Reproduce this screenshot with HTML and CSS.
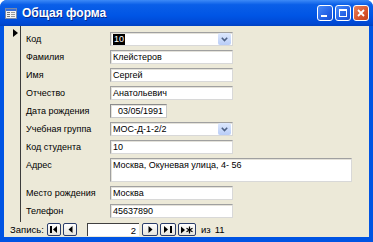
FILE: index.html
```html
<!DOCTYPE html>
<html lang="ru">
<head>
    <meta charset="UTF-8">
    <title>Общая форма</title>
    <link rel="stylesheet" href="styles.css">
</head>
<body>

    <div class="window">

        <!-- Title bar -->
        <div class="titlebar">
            <svg class="app-icon" width="12" height="11" viewBox="0 0 12 11">
                <rect x="0.5" y="0.5" width="11" height="10" fill="#f4f4f4" stroke="#7a8aa8"/>
                <rect x="1" y="1" width="10" height="2" fill="#3b6fd6"/>
                <rect x="2" y="4" width="3" height="1" fill="#777"/>
                <rect x="6" y="4" width="4" height="1" fill="#999"/>
                <rect x="2" y="6" width="3" height="1" fill="#777"/>
                <rect x="6" y="6" width="4" height="1" fill="#999"/>
                <rect x="2" y="8" width="3" height="1" fill="#777"/>
                <rect x="6" y="8" width="4" height="1" fill="#999"/>
            </svg>
            <span class="title">Общая форма</span>
            <div class="caption-buttons">
                <span class="cbtn">
                    <svg width="14" height="14" viewBox="0 0 14 14"><rect x="3" y="9" width="6" height="2" fill="#fff"/></svg>
                </span>
                <span class="cbtn">
                    <svg width="14" height="14" viewBox="0 0 14 14"><rect x="3.5" y="3.5" width="7" height="7" fill="none" stroke="#fff"/><rect x="3" y="3" width="8" height="2" fill="#fff"/></svg>
                </span>
                <span class="cbtn close">
                    <svg width="14" height="14" viewBox="0 0 14 14"><path d="M4 4 L10 10 M10 4 L4 10" stroke="#fff" stroke-width="1.8"/></svg>
                </span>
            </div>
        </div>

        <div class="frame">
            <div class="client">

                <!-- Record area -->
                <div class="detail">
                    <div class="selector">
                        <svg width="5" height="8" viewBox="0 0 5 8"><path d="M0 0 L5 4 L0 8 Z" fill="#000"/></svg>
                    </div>

                    <div class="fields">
                        <label>Код</label>
                        <div class="field combo w-std"><span class="sel">10</span><span class="drop"><svg width="7" height="5" viewBox="0 0 7 5"><path d="M0.8 0.8 L3.5 3.5 L6.2 0.8" fill="none" stroke="#4d6185" stroke-width="1.6"/></svg></span></div>

                        <label>Фамилия</label>
                        <div class="field w-std">Клейстеров</div>

                        <label>Имя</label>
                        <div class="field w-std">Сергей</div>

                        <label>Отчество</label>
                        <div class="field w-std">Анатольевич</div>

                        <label>Дата рождения</label>
                        <div class="field w-date date">03/05/1991</div>

                        <label>Учебная группа</label>
                        <div class="field combo w-std">МОС-Д-1-2/2<span class="drop"><svg width="7" height="5" viewBox="0 0 7 5"><path d="M0.8 0.8 L3.5 3.5 L6.2 0.8" fill="none" stroke="#4d6185" stroke-width="1.6"/></svg></span></div>

                        <label>Код студента</label>
                        <div class="field w-std">10</div>

                        <label class="top">Адрес</label>
                        <div class="field w-wide tall">Москва, Окуневая улица, 4- 56</div>

                        <label>Место рождения</label>
                        <div class="field w-std">Москва</div>

                        <label>Телефон</label>
                        <div class="field w-std">45637890</div>
                    </div>
                </div>

                <!-- Record navigation -->
                <div class="navbar">
                    <span class="nav-label">Запись:</span>
                    <span class="nbtn">
                        <svg width="8" height="7" viewBox="0 0 8 7"><rect x="0" y="0" width="2" height="7" fill="#000"/><path d="M7 0 L3 3.5 L7 7 Z" fill="#000"/></svg>
                    </span>
                    <span class="nbtn">
                        <svg width="5" height="7" viewBox="0 0 5 7"><path d="M4.5 0 L0.5 3.5 L4.5 7 Z" fill="#000"/></svg>
                    </span>
                    <span class="nav-field">2</span>
                    <span class="nbtn big">
                        <svg width="5" height="7" viewBox="0 0 5 7"><path d="M0.5 0 L4.5 3.5 L0.5 7 Z" fill="#000"/></svg>
                    </span>
                    <span class="nbtn big">
                        <svg width="8" height="7" viewBox="0 0 8 7"><path d="M0 0 L4 3.5 L0 7 Z" fill="#000"/><rect x="6" y="0" width="2" height="7" fill="#000"/></svg>
                    </span>
                    <span class="nbtn wide">
                        <svg width="12" height="8" viewBox="0 0 12 8"><path d="M0 0.5 L4 4 L0 7.5 Z" fill="#000"/><path d="M8.5 0.5 V7.5 M5.5 2.2 L11.5 5.8 M11.5 2.2 L5.5 5.8" stroke="#000" stroke-width="1.2"/></svg>
                    </span>
                    <span class="nav-of">из</span>
                    <span class="nav-count">11</span>
                </div>

            </div>
        </div>
    </div>

</body>
</html>
```

FILE: styles.css
```css
/* General */
body {
    margin: 0;
    padding: 0;
    font-family: 'Liberation Sans', Arial, sans-serif;
    font-size: 9px;
    color: #000;
    background-color: #ffffff;
}

.window {
    width: 373px;
    height: 242px;
    display: flex;
    flex-direction: column;
    background-color: #0054e3;
    border-radius: 7px 7px 0 0;
    overflow: hidden;
}

/* Title bar */
.titlebar {
    height: 26px;
    display: flex;
    align-items: center;
    padding: 0 4px 0 5px;
    background: linear-gradient(#3d8af7 0%, #0a5fe8 18%, #0055e5 60%, #0048d4 90%, #0041c0 100%);
    color: white;
}

.app-icon {
    margin-top: 1px;
}

.title {
    margin-left: 5px;
    font-weight: bold;
    font-size: 12px;
    text-shadow: 1px 1px 0 #0a2b8a;
}

.caption-buttons {
    margin-left: auto;
    display: flex;
    gap: 2px;
}

.cbtn {
    width: 14px;
    height: 14px;
    display: flex;
    border: 1px solid #fff;
    border-radius: 3px;
    background: linear-gradient(135deg, #4a8bf8 0%, #2462e6 60%, #1a4fd0 100%);
}

.cbtn.close {
    background: linear-gradient(135deg, #e8835e 0%, #d9552c 60%, #c2421c 100%);
}

/* Frame and client area */
.frame {
    flex: 1;
    display: flex;
    padding: 0 4px 5px 4px;
}

.client {
    flex: 1;
    display: flex;
    flex-direction: column;
    background-color: #ece9d8;
}

.detail {
    flex: 1;
    display: flex;
}

.selector {
    width: 17px;
    border-right: 1px solid #3c3c3c;
    padding: 3px 0 0 9px;
    box-sizing: border-box;
}

.fields {
    display: grid;
    grid-template-columns: 84px auto;
    grid-template-rows: repeat(7, 14px) 24px 14px 14px;
    row-gap: 4px;
    align-content: start;
    justify-items: start;
    padding: 6px 0 0 5px;
}

.fields label {
    align-self: center;
    white-space: nowrap;
}

.fields label.top {
    align-self: start;
    padding-top: 2px;
}

/* Text boxes */
.field {
    height: 14px;
    box-sizing: border-box;
    display: flex;
    align-items: center;
    padding-left: 2px;
    background-color: #fff;
    border: 1px solid;
    border-color: #a0a0a0 #d8d8d8 #d8d8d8 #a0a0a0;
    box-shadow: inset 1px 1px 0 #e4e2da;
    white-space: nowrap;
}

.w-std {
    width: 123px;
}

.w-date {
    width: 57px;
}

.w-wide {
    width: 242px;
}

.field.tall {
    height: 24px;
    align-items: flex-start;
    padding-top: 1px;
}

.field.date {
    justify-content: flex-end;
    padding-right: 3px;
    border-color: #8c8c8c #c8c8c8 #c8c8c8 #8c8c8c;
}

.sel {
    background-color: #000;
    color: #fff;
    padding: 0 1px;
    line-height: 11px;
}

.combo {
    position: relative;
}

.drop {
    position: absolute;
    right: 1px;
    top: 0;
    width: 13px;
    height: 12px;
    display: flex;
    align-items: center;
    justify-content: center;
    background: linear-gradient(#dde8fd, #b9cdf7);
    border-radius: 2px;
}

/* Navigation bar */
.navbar {
    height: 15px;
    display: flex;
    align-items: center;
    padding-left: 6px;
    font-size: 9.5px;
}

.nav-label {
    width: 37px;
}

.nbtn {
    width: 12px;
    height: 11px;
    margin-right: 2px;
    display: flex;
    align-items: center;
    justify-content: center;
    background: linear-gradient(#ffffff, #e6e4dc);
    border: 1px solid #2b3d6a;
    border-radius: 2px;
}

.nbtn.big {
    width: 14px;
    margin-right: 2px;
}

.nbtn.wide {
    width: 16px;
}

.nav-field {
    width: 48px;
    height: 12px;
    margin: 0 3px 0 8px;
    padding-right: 3px;
    display: flex;
    align-items: center;
    justify-content: flex-end;
    background-color: #fff;
    border-left: 1px solid #404040;
    border-top: 1px solid #404040;
}

.nav-of {
    margin-left: 3px;
}

.nav-count {
    margin-left: 4px;
}
```
